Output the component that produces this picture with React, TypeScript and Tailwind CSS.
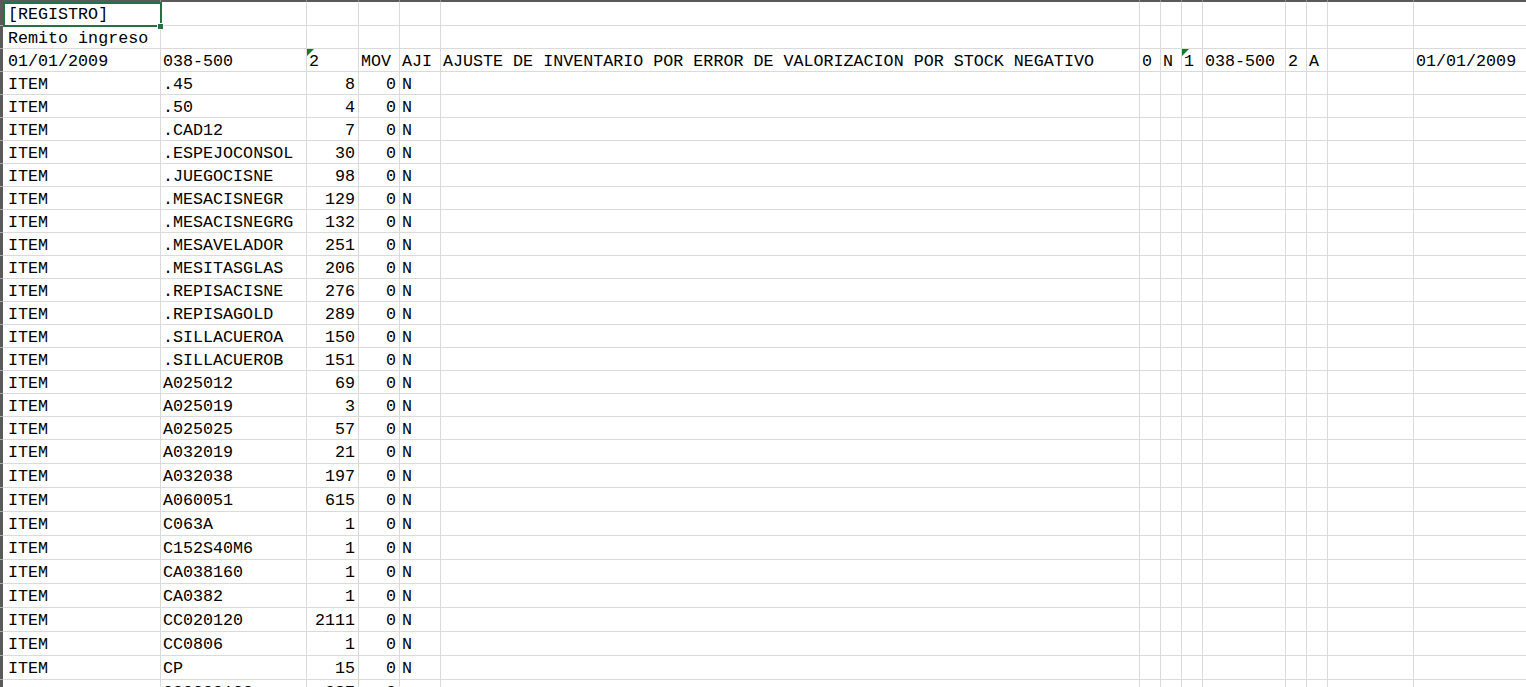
import React from "react";

type Cell = { t: string; r?: boolean; tri?: boolean };

const colW = [
  "w-[158px]",
  "w-[146px]",
  "w-[52px]",
  "w-[41px]",
  "w-[41px]",
  "w-[699px]",
  "w-[21px]",
  "w-[21px]",
  "w-[21px]",
  "w-[83px]",
  "w-[21px]",
  "w-[21px]",
  "w-[86px]",
  "w-[160px]",
];

const items: [string, string][] = [
  [".45", "8"],
  [".50", "4"],
  [".CAD12", "7"],
  [".ESPEJOCONSOL", "30"],
  [".JUEGOCISNE", "98"],
  [".MESACISNEGR", "129"],
  [".MESACISNEGRG", "132"],
  [".MESAVELADOR", "251"],
  [".MESITASGLAS", "206"],
  [".REPISACISNE", "276"],
  [".REPISAGOLD", "289"],
  [".SILLACUEROA", "150"],
  [".SILLACUEROB", "151"],
  ["A025012", "69"],
  ["A025019", "3"],
  ["A025025", "57"],
  ["A032019", "21"],
  ["A032038", "197"],
  ["A060051", "615"],
  ["C063A", "1"],
  ["C152S40M6", "1"],
  ["CA038160", "1"],
  ["CA0382", "1"],
  ["CC020120", "2111"],
  ["CC0806", "1"],
  ["CP", "15"],
];

const rows: Cell[][] = [
  [{ t: "[REGISTRO]" }],
  [{ t: "Remito ingreso" }],
  [
    { t: "01/01/2009" },
    { t: "038-500" },
    { t: "2", tri: true },
    { t: "MOV" },
    { t: "AJI" },
    { t: "AJUSTE DE INVENTARIO POR ERROR DE VALORIZACION POR STOCK NEGATIVO" },
    { t: "0" },
    { t: "N" },
    { t: "1", tri: true },
    { t: "038-500" },
    { t: "2" },
    { t: "A" },
    { t: "" },
    { t: "01/01/2009" },
  ],
  ...items.map(([c, q]) => [
    { t: "ITEM" },
    { t: c },
    { t: q, r: true },
    { t: "0", r: true },
    { t: "N" },
  ]),
  [{ t: "" }, { t: "CC0000100" }, { t: "287", r: true }, { t: "0", r: true }],
];

function rowH(i: number) {
  if (i === 0) return "h-[24px]";
  if (i < 19) return "h-[23px]";
  return "h-[24px]";
}

export default function App() {
  return (
    <div className="w-[1526px] h-[687px] overflow-hidden bg-white flex flex-col font-['Liberation_Mono',monospace] text-[16.7px] text-black">
      {/* column header remnant */}
      <div className="flex h-[2px] shrink-0 bg-[#5a5a5a]">
        <div className="w-[3px] shrink-0" />
        {colW.map((w, i) => (
          <div key={i} className={`${w} shrink-0 border-r border-[#8f8f8f]`} />
        ))}
      </div>
      <div className="relative flex flex-col">
        {rows.map((row, ri) => (
          <div key={ri} className={`flex shrink-0 ${rowH(ri)}`}>
            <div className="w-[3px] shrink-0 bg-[#5a5a5a] border-b border-[#a8a8a8]" />
            {colW.map((w, ci) => {
              const c = row[ci];
              const pad =
                c && c.r ? "justify-end pr-[3px]" : ci === 0 ? "justify-start pl-[5px]" : "justify-start pl-[2px]";
              return (
                <div
                  key={ci}
                  className={`${w} shrink-0 relative flex items-center pt-[4px] border-r border-b border-[#dadada] whitespace-pre overflow-visible leading-none ${pad}`}
                >
                  {c && c.tri && (
                    <span className="absolute left-0 top-0 w-0 h-0 border-t-[7px] border-r-[7px] border-t-[#137a2b] border-r-transparent" />
                  )}
                  {c ? c.t : ""}
                </div>
              );
            })}
          </div>
        ))}
        {/* selected cell A1 */}
        <div className="absolute left-[3px] top-0 w-[159px] h-[25px] border-2 border-[#217346] pointer-events-none" />
        <div className="absolute left-[157px] top-[21px] w-[7px] h-[7px] bg-[#217346] border border-white" />
      </div>
    </div>
  );
}
